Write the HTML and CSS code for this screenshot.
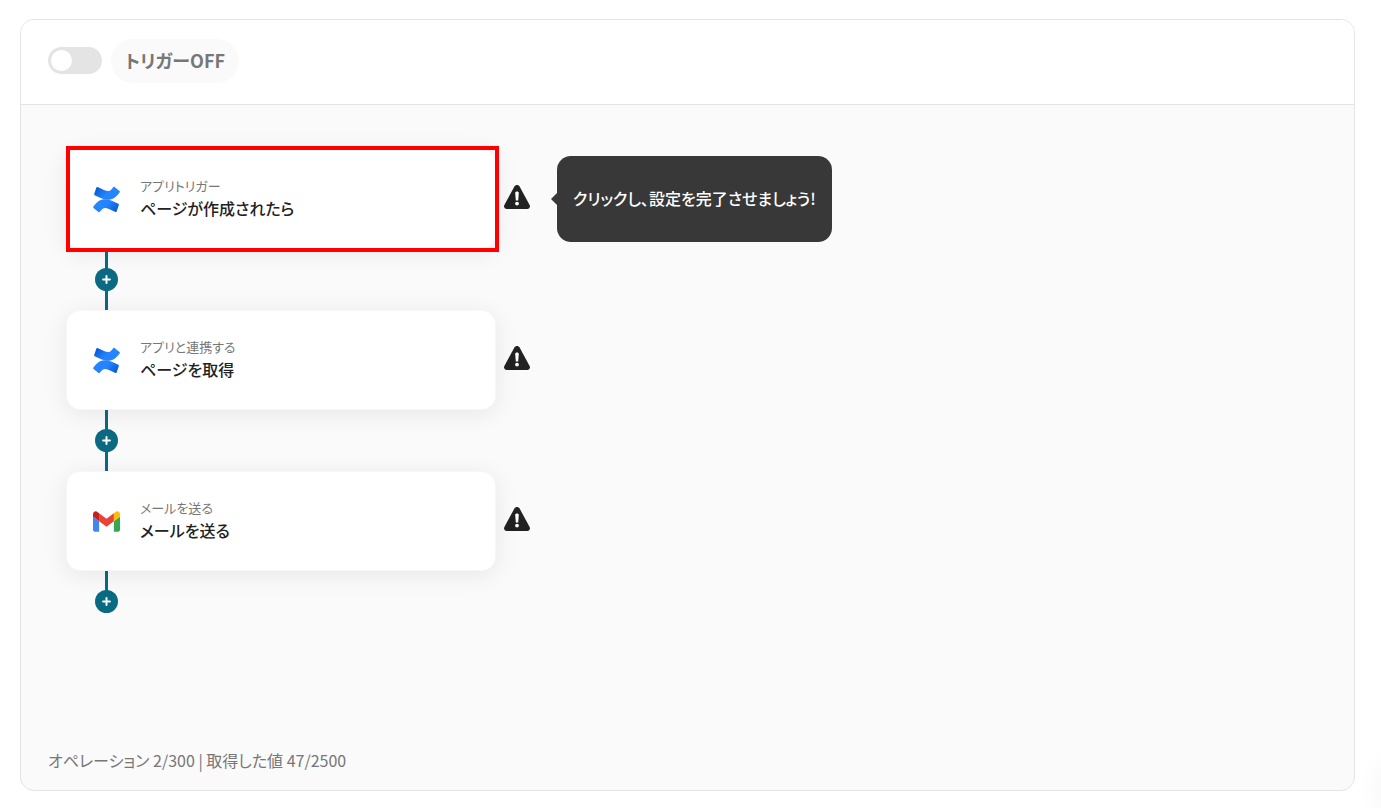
FILE: index.html
```
<!DOCTYPE html>
<html lang="ja">
<head>
<meta charset="utf-8">
<meta name="viewport" content="width=device-width, initial-scale=1">
<title>フローボット</title>
<link rel="stylesheet" href="styles.css">
</head>
<body>
<svg class="defs" width="0" height="0" aria-hidden="true">
  <defs>
    <linearGradient id="cf-top" x1="0" y1="0" x2="1" y2="0.4">
      <stop offset="0" stop-color="#0052cc"/><stop offset="0.6" stop-color="#2684ff"/>
    </linearGradient>
    <linearGradient id="cf-bottom" x1="1" y1="1" x2="0" y2="0.6">
      <stop offset="0" stop-color="#0052cc"/><stop offset="0.6" stop-color="#2684ff"/>
    </linearGradient>
    <symbol id="confluence" viewBox="0 0 28 28">
      <path fill="url(#cf-top)" d="M27.500 5.300 22.300 1c-.5-.4-1.100-.3-1.400.2-2.600 4-5 5-8.900 3.200L4.700 1.100c-.5-.2-1 0-1.200.5L1.200 8.400c-.1.5.1 1 .5 1.200l6.200 2.900c8.500 3.600 14.500 1.800 19.800-6 .3-.4.200-.9-.2-1.200z"/>
      <path fill="url(#cf-bottom)" d="M.5 22.700 5.700 27c.5.4 1.100.3 1.400-.2 2.600-4 5-5 8.900-3.200l7.300 3.300c.5.200 1 0 1.200-.5l2.300-6.800c.1-.5-.1-1-.5-1.200l-6.200-2.900C11.600 11.900 5.600 13.700.3 21.500c-.3.4-.2.900.2 1.200z"/>
    </symbol>
    <symbol id="gmail" viewBox="52 42 88 66">
      <path fill="#4285f4" d="M58 108h14V74L52 59v43c0 3.320 2.690 6 6 6"/>
      <path fill="#34a853" d="M120 108h14c3.320 0 6-2.690 6-6V59l-20 15"/>
      <path fill="#fbbc04" d="M120 48v26l20-15v-8c0-7.420-8.470-11.650-14.400-7.200"/>
      <path fill="#ea4335" d="M72 74V48l24 18 24-18v26L96 92"/>
      <path fill="#c5221f" d="M52 51v8l20 15V48l-5.600-4.200c-5.940-4.450-14.400-.22-14.400 7.200"/>
    </symbol>
    <symbol id="warning" viewBox="0 0 26 24">
      <path fill="#222" d="M10.400 1.500c1.200-2 4-2 5.200 0l10 18.400c1 1.900-.3 4.100-2.400 4.100H2.800C.7 24-.6 21.800.4 19.900z"/>
      <path fill="#fff" d="M11.200 8c0-1 .8-1.500 1.800-1.500s1.800.5 1.800 1.500l-.6 7.600h-2.400z"/>
      <circle fill="#fff" cx="13" cy="18.600" r="1.900"/>
    </symbol>
    <symbol id="plus" viewBox="0 0 10 10">
      <path fill="none" stroke="#fff" stroke-width="2.200" stroke-linecap="round" d="M5 1.200v7.600M1.200 5h7.600"/>
    </symbol>
  </defs>
</svg>

<main class="panel">
  <header class="panel-header">
    <input class="switch" type="checkbox" role="switch" id="trigger">
    <label class="switch-label" for="trigger">トリガーOFF</label>
  </header>

  <section class="canvas">
    <div class="flow">
      <div class="step">
        <button class="card card-selected" type="button">
          <svg class="app-icon" aria-hidden="true"><use href="#confluence"/></svg>
          <span class="card-text">
            <span class="card-kind">アプリトリガー</span>
            <span class="card-title">ページが作成されたら</span>
          </span>
        </button>
        <svg class="warning" role="img" aria-label="警告"><use href="#warning"/></svg>
        <div class="hint" role="status">クリックし、設定を完了させましょう!</div>
      </div>
      <div class="connector">
        <button class="add" type="button" aria-label="追加"><svg class="plus"><use href="#plus"/></svg></button>
      </div>
      <div class="step">
        <button class="card" type="button">
          <svg class="app-icon" aria-hidden="true"><use href="#confluence"/></svg>
          <span class="card-text">
            <span class="card-kind">アプリと連携する</span>
            <span class="card-title">ページを取得</span>
          </span>
        </button>
        <svg class="warning" role="img" aria-label="警告"><use href="#warning"/></svg>
      </div>
      <div class="connector">
        <button class="add" type="button" aria-label="追加"><svg class="plus"><use href="#plus"/></svg></button>
      </div>
      <div class="step">
        <button class="card" type="button">
          <svg class="app-icon" aria-hidden="true"><use href="#gmail"/></svg>
          <span class="card-text">
            <span class="card-kind">メールを送る</span>
            <span class="card-title">メールを送る</span>
          </span>
        </button>
        <svg class="warning" role="img" aria-label="警告"><use href="#warning"/></svg>
      </div>
      <div class="connector connector-last">
        <button class="add" type="button" aria-label="追加"><svg class="plus"><use href="#plus"/></svg></button>
      </div>
    </div>
    <p class="usage">オペレーション 2/300 | 取得した値 47/2500</p>
  </section>
</main>
<div class="floating-widget"></div>
</body>
</html>
```

FILE: styles.css
```
*, *::before, *::after { box-sizing: border-box; }

body {
  display: flex;
  min-height: 100vh;
  margin: 0;
  padding: 19px 26px 17px 20px;
  overflow: hidden;
  background: #fff;
  color: #222;
  font-family: "Noto Sans CJK JP", sans-serif;
  font-size: 16px;
  line-height: 22px;
  font-feature-settings: "palt";
}

button { font: inherit; font-feature-settings: inherit; color: inherit; }

.defs { position: absolute; }

.panel {
  flex: 1;
  display: flex;
  flex-direction: column;
  border: 1px solid #e4e4e4;
  border-radius: 14px;
  background: #fafafa;
  overflow: hidden;
}

.panel-header {
  display: flex;
  align-items: center;
  gap: 9px;
  padding: 19px 27px 21px;
  border-bottom: 1px solid #e4e4e4;
  background: #fff;
}

.switch {
  appearance: none;
  display: flex;
  width: 54px;
  height: 27px;
  margin: 0 0 1px;
  padding: 3px;
  border-radius: 14px;
  background: #e4e4e4;
  cursor: pointer;
}
.switch::before {
  content: "";
  width: 21px;
  height: 21px;
  border-radius: 50%;
  background: #fff;
}
.switch:checked { justify-content: flex-end; background: #0a6a82; }

.switch-label {
  padding: 10px 14px 12px;
  border-radius: 22px;
  background: #fafafa;
  color: #777;
  font-size: 18px;
  font-weight: 700;
}

.canvas {
  flex: 1;
  display: flex;
  flex-direction: column;
  justify-content: space-between;
  padding: 44px 27px 19px;
}

.flow { padding-left: 18px; }

.step { display: flex; align-items: center; }

.card {
  position: relative;
  display: flex;
  align-items: center;
  gap: 20px;
  width: 430px;
  min-height: 100px;
  padding: 0 26px;
  border: 1px solid #f7f7f7;
  border-radius: 14px;
  background: #fff;
  box-shadow: 0 4px 24px rgba(0, 0, 0, 0.08);
  text-align: left;
  cursor: pointer;
}
.card-selected::after {
  content: "";
  position: absolute;
  inset: -4px -4px -4px -1px;
  border: 4px solid #f00;
}

.app-icon { width: 27px; height: 27px; }

.card-text { display: flex; flex-direction: column; padding-bottom: 4px; }
.card-kind { color: #777; font-size: 13px; }
.card-title { font-weight: 500; }

.warning { width: 26px; height: 24px; margin: 0 26px 4px 8px; }

.hint {
  position: relative;
  padding: 31px 16px 33px;
  margin-left: 1px;
  border-radius: 14px;
  background: #383838;
  color: #fff;
  font-weight: 500;
}
.hint::before {
  content: "";
  position: absolute;
  top: 50%;
  right: 100%;
  border: 6px solid transparent;
  border-right-color: #383838;
  border-left: 0;
  transform: translateY(-50%);
}

.connector {
  display: flex;
  align-items: center;
  justify-content: center;
  width: 81px;
  height: 61px;
  background: linear-gradient(#0a6a82, #0a6a82) center / 3px 100% no-repeat;
}
.connector-last { background-position: top; background-size: 3px 50%; }

.add {
  display: grid;
  place-items: center;
  width: 23px;
  height: 23px;
  padding: 0;
  border: 0;
  border-radius: 50%;
  background: #0a6a82;
  cursor: pointer;
}
.plus { width: 9px; height: 9px; }

.usage { margin: 0; color: #777; }

.floating-widget {
  position: fixed;
  right: -60px;
  bottom: -10px;
  width: 56px;
  height: 56px;
  border-radius: 50%;
  box-shadow: 0 0 32px rgba(0, 0, 0, 0.08);
}
```
